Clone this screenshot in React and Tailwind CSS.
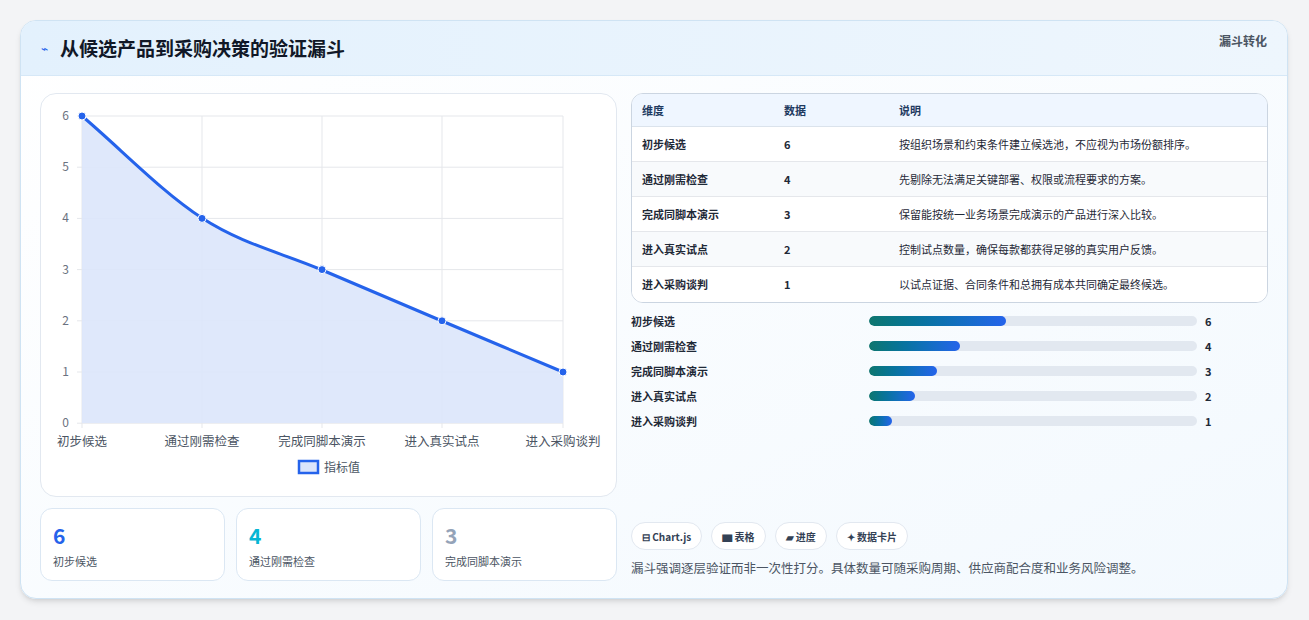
import React from 'react';

const rows = [
  ['初步候选', 6, '按组织场景和约束条件建立候选池，不应视为市场份额排序。'],
  ['通过刚需检查', 4, '先剔除无法满足关键部署、权限或流程要求的方案。'],
  ['完成同脚本演示', 3, '保留能按统一业务场景完成演示的产品进行深入比较。'],
  ['进入真实试点', 2, '控制试点数量，确保每款都获得足够的真实用户反馈。'],
  ['进入采购谈判', 1, '以试点证据、合同条件和总拥有成本共同确定最终候选。'],
];

const font = { fontFamily: '"Noto Sans CJK SC", "Noto Sans", sans-serif' };

const Chart = () => {
  const xs = [41, 161, 281, 401, 522];
  const y = (v) => 22 + (6 - v) * 51.2;
  const pts = rows.map((r, i) => [xs[i], y(r[1])]);
  const line = 'M41,22 C81,56 121,98 161,124 C201,150 241,159 281,176 C321,193 361,210 401,227 C441,244 482,261 522,278';
  return (
    <svg width="576" height="400" className="block">
      {[0, 1, 2, 3, 4, 5, 6].map((v) => (
        <g key={v}>
          <line x1="36" x2="522" y1={y(v)} y2={y(v)} stroke="#e5e7eb" />
          <text x="28" y={y(v) + 4} fontSize="12" fill="#6b7280" textAnchor="end">{v}</text>
        </g>
      ))}
      {xs.map((x) => <line key={x} x1={x} x2={x} y1="22" y2="334" stroke="#e5e7eb" />)}
      <path d={line + ' L522,329 L41,329 Z'} fill="#dbe5fb" fillOpacity="0.9" />
      <path d={line} fill="none" stroke="#2563eb" strokeWidth="3" />
      {pts.map(([px, py], i) => <circle key={i} cx={px} cy={py} r="4" fill="#2563eb" stroke="#fff" strokeWidth="1" />)}
      {rows.map((r, i) => (
        <text key={i} x={xs[i]} y="352" fontSize="12.5" fill="#4b5563" textAnchor="middle">{r[0]}</text>
      ))}
      <rect x="258" y="367" width="19" height="12" fill="#dbe5fb" stroke="#2563eb" strokeWidth="2.5" />
      <text x="283" y="378" fontSize="12" fill="#4b5563">指标值</text>
    </svg>
  );
};

export default function App() {
  return (
    <div className="min-h-screen bg-[#f3f4f6] pt-5 px-5" style={font}>
      <div className="w-[1268px] h-[579px] rounded-2xl border border-[#cfe3f3] bg-gradient-to-br from-white to-[#f3f9fe] overflow-hidden shadow-md">
        <div className="h-[55px] flex items-center justify-between px-5 bg-gradient-to-r from-[#e3f1fd] to-[#eef6fd] border-b border-[#d6e8f7]">
          <div className="flex items-center gap-3">
            <span className="text-[#2563eb] text-xs">⌁</span>
            <h1 className="text-[19px] font-bold text-[#111827]">从候选产品到采购决策的验证漏斗</h1>
          </div>
          <span className="self-start mt-3 text-xs font-semibold text-[#4b5563]">漏斗转化</span>
        </div>
        <div className="flex gap-[14px] px-[19px] pt-[17px]">
          <div className="w-[577px] flex flex-col gap-[11px]">
            <div className="h-[404px] rounded-2xl border border-[#e2e8f0] bg-white">
              <Chart />
            </div>
            <div className="grid grid-cols-3 gap-[11px]">
              {[['6', '初步候选', 'text-[#2563eb]'], ['4', '通过刚需检查', 'text-[#06b6d4]'], ['3', '完成同脚本演示', 'text-[#94a3b8]']].map(([n, l, c]) => (
                <div key={l} className="h-[73px] rounded-xl border border-[#dbe7f3] bg-white px-3 pt-3">
                  <div className={`text-[21px] font-bold leading-7 ${c}`}>{n}</div>
                  <div className="text-[11px] text-[#4b5563] mt-1">{l}</div>
                </div>
              ))}
            </div>
          </div>
          <div className="w-[638px] flex flex-col">
            <div className="rounded-xl border border-[#cbd5e1] overflow-hidden bg-white">
              <div className="flex h-[33px] items-center bg-[#eff6ff] text-[11px] font-bold text-[#1e3a5f] border-b border-[#dbe3ec]">
                <div className="w-[152px] pl-[10px]">维度</div>
                <div className="w-[115px]">数据</div>
                <div>说明</div>
              </div>
              {rows.map((r, i) => (
                <div key={i} className={`flex h-[35px] items-center text-[11px] text-[#1f2937] ${i % 2 ? 'bg-[#f8fafc]' : 'bg-white'} ${i < 4 ? 'border-b border-[#e5e7eb]' : ''}`}>
                  <div className="w-[152px] pl-[10px] font-semibold">{r[0]}</div>
                  <div className="w-[115px] font-semibold">{r[1]}</div>
                  <div>{r[2]}</div>
                </div>
              ))}
            </div>
            <div className="flex flex-col gap-[11px] mt-[11px]">
              {rows.map((r, i) => (
                <div key={i} className="flex items-center h-[14px] text-[11px] font-semibold text-[#1f2937]">
                  <div className="w-[238px]">{r[0]}</div>
                  <div className="w-[328px] h-[10px] rounded-full bg-[#e2e8f0] overflow-hidden">
                    <div className="h-full rounded-full bg-gradient-to-r from-[#0f766e] to-[#2563eb]" style={{ width: `${r[1] * 6.94}%` }} />
                  </div>
                  <div className="ml-2 font-bold">{r[1]}</div>
                </div>
              ))}
            </div>
            <div className="flex gap-[9px] mt-[94px]">
              {['⊟ Chart.js', '▆ 表格', '▰ 进度', '✦ 数据卡片'].map((c) => (
                <span key={c} className="h-[28px] px-[10px] flex items-center rounded-full border border-[#e2e8f0] bg-white text-[10px] font-bold text-[#334155]">{c}</span>
              ))}
            </div>
            <p className="mt-[9px] text-[12.5px] text-[#4b5563]">漏斗强调逐层验证而非一次性打分。具体数量可随采购周期、供应商配合度和业务风险调整。</p>
          </div>
        </div>
      </div>
    </div>
  );
}
